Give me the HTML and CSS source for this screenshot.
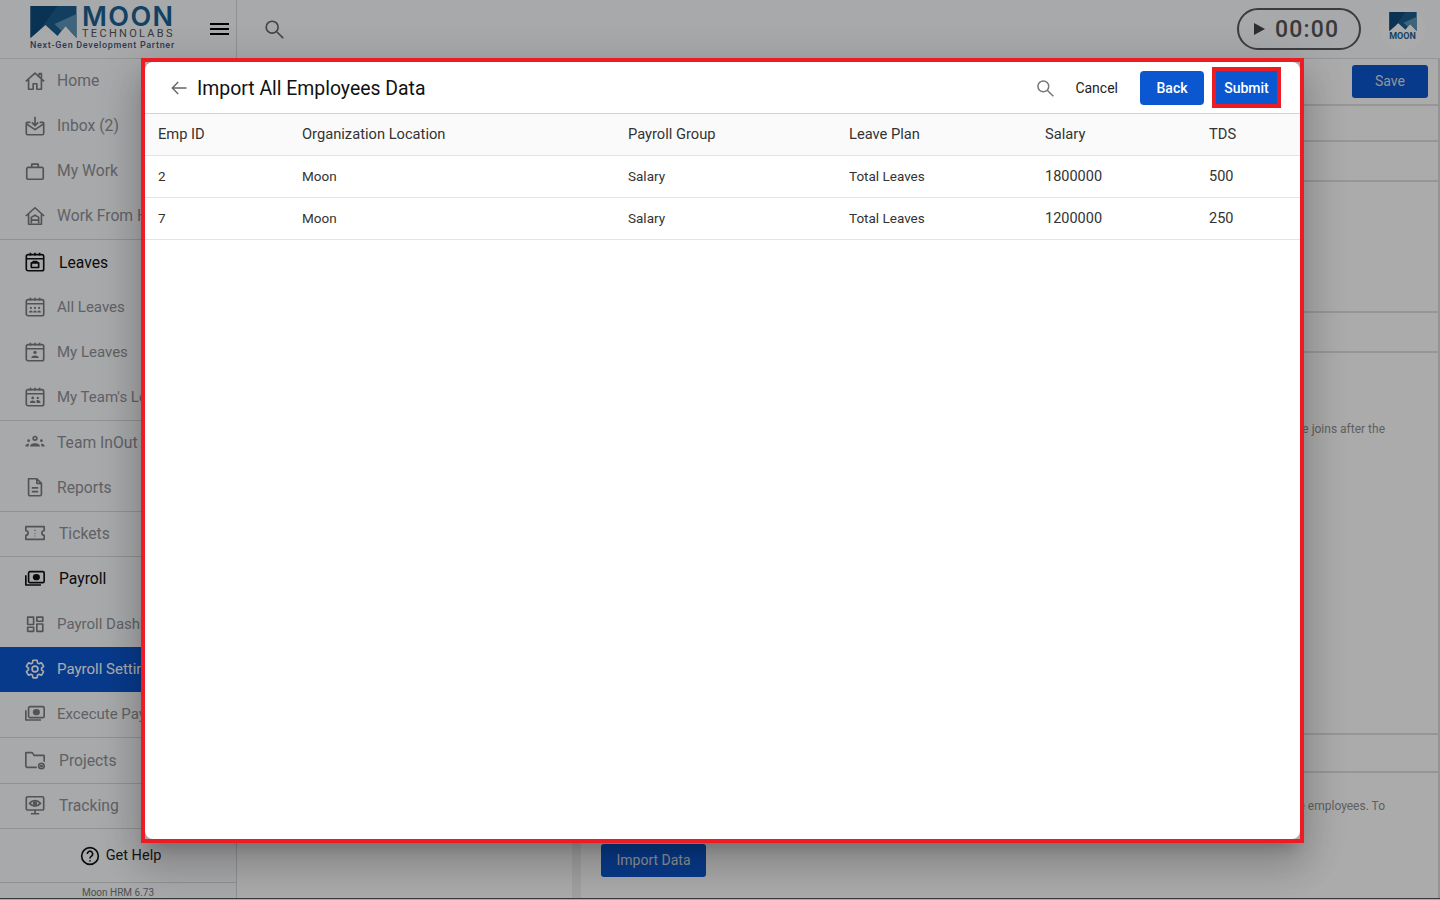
FILE: index.html
```html
<!DOCTYPE html>
<html lang="en">
<head>
    <meta charset="UTF-8">
    <title>Moon HRM - Payroll Settings</title>
    <link rel="stylesheet" href="styles.css">
</head>
<body>
    <svg class="sprite" xmlns="http://www.w3.org/2000/svg">
        <symbol id="i-mark" viewBox="0 0 46 32">
            <path fill="#1c5f8f" d="M0 0h46v32L35 20 27 30 15 19 0 32z"/>
            <path fill="#0f4c7c" d="M0 0h27L10 23 0 32z"/>
            <path fill="#5b95b8" d="M46 8v24L35 20 31 25 24 18z"/>
        </symbol>
        <symbol id="i-home" viewBox="0 0 24 24"><path d="M2 12.5 12 3.5l10 9M16.5 6V4h2.5v4.5M5 10.5V21h5v-6h4v6h5V10.5"/></symbol>
        <symbol id="i-inbox" viewBox="0 0 24 24"><path d="M7 8H3.5a1 1 0 0 0-1 1v11A1.5 1.5 0 0 0 4 21.5h16a1.5 1.5 0 0 0 1.5-1.5V9a1 1 0 0 0-1-1H17M3 10l9 6 9-6M12 2v9M8.5 8l3.5 3.5L15.5 8"/></symbol>
        <symbol id="i-work" viewBox="0 0 24 24"><rect x="3" y="8" width="18" height="13" rx="1.5"/><path d="M8.5 8V4.5h7V8"/></symbol>
        <symbol id="i-wfh" viewBox="0 0 24 24"><path d="M2 12 12 3l10 9M5 10v11h14V10M8 20v-6.500l4-2.500 4 2.500V20M8 16.500h8"/></symbol>
        <symbol id="i-cal-bag" viewBox="0 0 24 24"><rect x="2.5" y="4" width="19" height="17.5" rx="2"/><path d="M2.5 8.5h19M7 2v3M12 2v3M17 2v3"/><path d="M8 13h8v5H8zM10 13v-1.500h4V13"/></symbol>
        <symbol id="i-cal-all" viewBox="0 0 24 24"><rect x="2.5" y="4" width="19" height="17.5" rx="2"/><path d="M2.5 8.5h19M7 2v3M12 2v3M17 2v3"/><g fill="currentColor" stroke="none"><circle cx="7.5" cy="13" r="1.2"/><circle cx="12" cy="13" r="1.2"/><circle cx="16.5" cy="13" r="1.2"/><path d="M5.5 18c0-3 4-3 4 0zM10 18c0-3 4-3 4 0zM14.5 18c0-3 4-3 4 0z"/></g></symbol>
        <symbol id="i-cal-me" viewBox="0 0 24 24"><rect x="2.5" y="4" width="19" height="17.5" rx="2"/><path d="M2.5 8.5h19M7 2v3M12 2v3M17 2v3"/><g fill="currentColor" stroke="none"><circle cx="12" cy="12.5" r="1.8"/><path d="M8 18.5c0-3.500 8-3.500 8 0z"/></g></symbol>
        <symbol id="i-cal-team" viewBox="0 0 24 24"><rect x="2.5" y="4" width="19" height="17.5" rx="2"/><path d="M2.5 8.5h19M7 2v3M12 2v3M17 2v3"/><g fill="currentColor" stroke="none"><circle cx="9.5" cy="13" r="1.5"/><circle cx="15" cy="13" r="1.3"/><path d="M6.5 18.5c0-3.500 6-3.500 6 0zM13.500 15.500c2.500-.5 4.500.5 4.500 3h-4.200c0-1-.2-2-.3-3z"/></g></symbol>
        <symbol id="i-team" viewBox="0 0 24 24"><circle cx="12" cy="8" r="2"/><circle cx="5" cy="10.5" r="1.5" fill="currentColor" stroke="none"/><circle cx="19" cy="10.5" r="1.5" fill="currentColor" stroke="none"/><path fill="currentColor" stroke="none" d="M6.500 17c0-5 11-5 11 0zM1.500 17c0-2.500 2-3 4-3-.5 1-.5 2-.5 3zM22.500 17c0-2.500-2-3-4-3 .5 1 .5 2 .5 3z"/></symbol>
        <symbol id="i-report" viewBox="0 0 24 24"><path d="M5 3h9l5 5v12a1.500 1.500 0 0 1-1.500 1.500h-11A1.500 1.500 0 0 1 5 20zM14 3v5h5M8.500 13h7M8.500 17h7"/></symbol>
        <symbol id="i-ticket" viewBox="0 0 24 24"><path d="M2 5h20v4.500a2.500 2.500 0 0 0 0 5V19H2v-4.500a2.500 2.500 0 0 0 0-5zM12 8.500v1M12 12v.5M12 15v.5"/></symbol>
        <symbol id="i-money" viewBox="0 0 24 24"><rect x="5" y="4" width="17" height="12" rx="1.5"/><path d="M2 8v10.500h16.500"/><ellipse cx="13.5" cy="10" rx="3" ry="2.5" fill="currentColor"/></symbol>
        <symbol id="i-dash" viewBox="0 0 24 24"><rect x="4" y="4.5" width="6.5" height="8"/><rect x="14" y="4.5" width="6.5" height="4.5"/><rect x="14" y="12" width="6.5" height="8"/><rect x="4" y="15.5" width="6.5" height="4.5"/></symbol>
        <symbol id="i-gear" viewBox="0 0 24 24"><path d="M19.140 12.940c.04-.3.06-.61.06-.94 0-.32-.02-.64-.07-.94l2.030-1.580c.18-.14.23-.41.12-.61l-1.920-3.320c-.12-.22-.37-.29-.59-.22l-2.390.96c-.5-.38-1.030-.7-1.620-.94l-.36-2.540c-.04-.24-.24-.41-.48-.41h-3.840c-.24 0-.43.17-.47.41l-.36 2.540c-.59.24-1.130.57-1.620.94l-2.390-.96c-.22-.08-.47 0-.59.22L2.740 8.870c-.12.21-.08.47.12.61l2.030 1.580c-.05.3-.09.63-.09.94s.02.64.07.94l-2.030 1.580c-.18.14-.23.41-.12.61l1.920 3.320c.12.22.37.29.59.22l2.390-.96c.5.38 1.030.7 1.620.94l.36 2.540c.05.24.24.41.48.41h3.840c.24 0 .44-.17.47-.41l.36-2.540c.59-.24 1.130-.56 1.620-.94l2.390.96c.22.08.47 0 .59-.22l1.920-3.320c.12-.22.07-.47-.12-.61l-2.010-1.580z"/><circle cx="12" cy="12" r="3.2"/></symbol>
        <symbol id="i-folder" viewBox="0 0 24 24"><path d="M14 20H3.500A1.500 1.500 0 0 1 2 18.500V4h7l2 3h10.500a.5.5 0 0 1 .5.5V14"/><circle cx="19" cy="18.5" r="3"/><circle cx="19" cy="18.5" r=".8"/></symbol>
        <symbol id="i-monitor" viewBox="0 0 24 24"><rect x="2.5" y="3" width="19" height="14.5" rx="1.5"/><path d="M12 17.500V21M7.500 21.500h9M6 10.200c3.500-4 8.500-4 12 0-3.500 4-8.500 4-12 0z"/><circle cx="12" cy="10.2" r="1.5" fill="currentColor"/></symbol>
        <symbol id="i-search" viewBox="0 0 24 24"><circle cx="10" cy="10" r="6.5"/><path d="m15 15 7 7"/></symbol>
    </svg>

    <div class="app">
        <header class="topbar">
            <div class="brand">
                <div class="logo">
                    <svg class="logo-mark"><use href="#i-mark"/></svg>
                    <div class="logo-name">
                        <span class="logo-moon">MOON</span>
                        <span class="logo-tech">TECHNOLABS</span>
                    </div>
                </div>
                <span class="logo-tag">Next-Gen Development Partner</span>
                <div class="burger"><span></span><span></span><span></span></div>
            </div>
            <svg class="icon top-search"><use href="#i-search"/></svg>
            <div class="timer">
                <span class="play"></span>
                <span class="time">00:00</span>
            </div>
            <div class="avatar">
                <svg class="avatar-mark"><use href="#i-mark"/></svg>
                <span class="avatar-text">MOON</span>
            </div>
        </header>

        <div class="body-row">
            <aside class="sidebar">
                <nav class="nav">
                    <div class="nav-group">
                        <a class="nav-item"><svg class="icon"><use href="#i-home"/></svg>Home</a>
                        <a class="nav-item"><svg class="icon"><use href="#i-inbox"/></svg>Inbox (2)</a>
                        <a class="nav-item"><svg class="icon"><use href="#i-work"/></svg>My Work</a>
                        <a class="nav-item"><svg class="icon"><use href="#i-wfh"/></svg>Work From Home</a>
                    </div>
                    <div class="nav-group">
                        <a class="nav-item nav-head active level"><svg class="icon"><use href="#i-cal-bag"/></svg>Leaves</a>
                        <a class="nav-item level small"><svg class="icon"><use href="#i-cal-all"/></svg>All Leaves</a>
                        <a class="nav-item level small"><svg class="icon"><use href="#i-cal-me"/></svg>My Leaves</a>
                        <a class="nav-item level small"><svg class="icon"><use href="#i-cal-team"/></svg>My Team's Leaves</a>
                    </div>
                    <div class="nav-group">
                        <a class="nav-item"><svg class="icon"><use href="#i-team"/></svg>Team InOut</a>
                        <a class="nav-item"><svg class="icon"><use href="#i-report"/></svg>Reports</a>
                    </div>
                    <div class="nav-group">
                        <a class="nav-item nav-head"><svg class="icon"><use href="#i-ticket"/></svg>Tickets</a>
                    </div>
                    <div class="nav-group">
                        <a class="nav-item nav-head active"><svg class="icon"><use href="#i-money"/></svg>Payroll</a>
                        <a class="nav-item small"><svg class="icon"><use href="#i-dash"/></svg>Payroll Dashboard</a>
                        <a class="nav-item selected small"><svg class="icon"><use href="#i-gear"/></svg>Payroll Settings</a>
                        <a class="nav-item small"><svg class="icon"><use href="#i-money"/></svg>Excecute Payroll</a>
                    </div>
                    <div class="nav-group">
                        <a class="nav-item nav-head level"><svg class="icon"><use href="#i-folder"/></svg>Projects</a>
                    </div>
                    <div class="nav-group">
                        <a class="nav-item nav-head"><svg class="icon"><use href="#i-monitor"/></svg>Tracking</a>
                    </div>
                </nav>
                <div class="help">
                    <svg class="help-icon" viewBox="0 0 24 24"><circle cx="12" cy="12" r="10"/><path d="M8.800 9.500a3.200 3.200 0 1 1 5 2.600c-1.200.8-1.800 1.400-1.800 2.900M12 17v1.500"/></svg>
                    Get Help
                </div>
                <div class="version">Moon HRM 6.73</div>
            </aside>

            <main class="content">
                <div class="content-strip"></div>
                <div class="panel">
                    <div class="panel-head"><button class="btn-save">Save</button></div>
                    <div class="panel-row h-36"></div>
                    <div class="panel-row h-40"></div>
                    <div class="panel-row h-131"></div>
                    <div class="panel-row h-40"></div>
                    <div class="panel-row h-382"><p class="panel-text">Salary will be prorated if the employee joins after the</p></div>
                    <div class="panel-row h-38"></div>
                    <div class="panel-last">
                        <p class="panel-text">This data is applied to all the employees. To</p>
                        <button class="btn-import">Import Data</button>
                    </div>
                </div>
            </main>
        </div>
    </div>

    <div class="overlay"></div>

    <div class="dialog-frame">
        <div class="dialog">
            <div class="dialog-head">
                <svg class="back-arrow" viewBox="0 0 24 24"><path d="M22 12H3M11 4l-8 8 8 8"/></svg>
                <h1>Import All Employees Data</h1>
                <svg class="icon dialog-search"><use href="#i-search"/></svg>
                <span class="cancel">Cancel</span>
                <button class="btn-blue">Back</button>
                <button class="btn-blue btn-marked">Submit</button>
            </div>
            <table class="data-table">
                <colgroup>
                    <col class="col-id"><col class="col-org"><col class="col-group"><col class="col-plan"><col class="col-salary"><col>
                </colgroup>
                <thead>
                    <tr><th>Emp ID</th><th>Organization Location</th><th>Payroll Group</th><th>Leave Plan</th><th>Salary</th><th>TDS</th></tr>
                </thead>
                <tbody>
                    <tr><td>2</td><td>Moon</td><td>Salary</td><td>Total Leaves</td><td class="num">1800000</td><td class="num">500</td></tr>
                    <tr><td>7</td><td>Moon</td><td>Salary</td><td>Total Leaves</td><td class="num">1200000</td><td class="num">250</td></tr>
                </tbody>
            </table>
        </div>
    </div>
</body>
</html>
```

FILE: styles.css
```css
/* Global */
* {
    box-sizing: border-box;
}

body {
    margin: 0;
    height: 900px;
    overflow: hidden;
    font-family: Roboto, "Noto Sans", sans-serif;
    background: #fff;
    color: #222;
}

.sprite {
    display: none;
}

.icon {
    width: 22px;
    height: 22px;
    flex: none;
    fill: none;
    stroke: currentColor;
    stroke-width: 1.8;
    stroke-linejoin: round;
}

.app {
    display: flex;
    flex-direction: column;
    height: 899px;
    border-bottom: 1px solid #555;
}

/* Top bar */
.topbar {
    display: flex;
    align-items: center;
    height: 59px;
    flex: none;
    background: #fbfcff;
    border-bottom: 1px solid #e0e0e0;
}

.brand {
    position: relative;
    width: 237px;
    height: 58px;
    flex: none;
    border-right: 1px solid #d8d8d8;
}

.logo {
    display: flex;
    gap: 5px;
    padding: 6px 0 0 30px;
}

.logo-mark {
    width: 47px;
    height: 32px;
}

.logo-name {
    display: flex;
    flex-direction: column;
}

.logo-moon {
    font-family: Inter, Roboto, sans-serif;
    font-size: 27px;
    line-height: 22px;
    font-weight: 600;
    letter-spacing: 1.4px;
    color: #1c6394;
}

.logo-tech {
    font-size: 11px;
    line-height: 11px;
    letter-spacing: 2.3px;
    color: #555;
}

.logo-tag {
    display: block;
    margin: 1px 0 0 30px;
    font-size: 9px;
    line-height: 10px;
    font-weight: 500;
    letter-spacing: .7px;
    color: #45587a;
}

.burger {
    position: absolute;
    left: 210px;
    top: 23px;
    width: 19px;
    display: flex;
    flex-direction: column;
    gap: 3px;
}

.burger span {
    height: 2px;
    background: #000;
}

.top-search {
    margin-left: 26px;
    color: #666;
}

.timer {
    display: flex;
    align-items: center;
    gap: 10px;
    width: 124px;
    height: 42px;
    margin-left: auto;
    padding-left: 15px;
    border: 2px solid #5a5a5a;
    border-radius: 21px;
}

.play {
    width: 0;
    height: 0;
    border-left: 11px solid #444;
    border-top: 6.5px solid transparent;
    border-bottom: 6.5px solid transparent;
}

.time {
    font-size: 23px;
    font-weight: 500;
    letter-spacing: 1.2px;
    color: #555;
}

.avatar {
    display: flex;
    flex-direction: column;
    align-items: center;
    width: 45px;
    height: 44px;
    margin: 0 15px 0 19px;
    padding-top: 5px;
    border-radius: 50%;
    background: #fff;
}

.avatar-mark {
    width: 28px;
    height: 19px;
}

.avatar-text {
    font-size: 9px;
    line-height: 10px;
    font-weight: 700;
    color: #1c6394;
}

.body-row {
    display: flex;
    flex: 1;
    min-height: 0;
}

/* Sidebar */
.sidebar {
    display: flex;
    flex-direction: column;
    width: 237px;
    flex: none;
    background: #fbfcff;
    border-right: 1px solid #d8d8d8;
}

.nav-group {
    border-bottom: 1px solid #d8d8d8;
}

.nav-item {
    display: flex;
    align-items: center;
    gap: 11px;
    height: 45px;
    padding: 0 0 2px 24px;
    font-size: 15.7px;
    white-space: nowrap;
    color: #8f9197;
}

/* these rows sit 1px lower than the rest */
.nav-item.level {
    padding-bottom: 0;
}

.nav-item.small {
    font-size: 15px;
}

.nav-item .icon {
    color: #7d7d7d;
}

.nav-head {
    gap: 13px;
    height: 44.7px;
}

.nav-item.active {
    color: #111;
}

.nav-item.active .icon {
    color: #111;
}

.nav-item.selected {
    background: #0b57d0;
    color: #fff;
}

.nav-item.selected .icon {
    color: #fff;
}

.help {
    display: flex;
    align-items: center;
    justify-content: center;
    gap: 6px;
    flex: 1;
    padding-left: 5px;
    font-size: 14.5px;
    color: #222;
    border-bottom: 1px solid #d8d8d8;
}

.help-icon {
    width: 20px;
    height: 20px;
    fill: none;
    stroke: #111;
    stroke-width: 2;
}

.version {
    height: 15px;
    font-size: 10px;
    line-height: 19px;
    text-align: center;
    color: #777;
}

/* Background page */
.content {
    display: flex;
    flex: 1;
    padding-left: 335px;
    background: #fff;
}

.content-strip {
    width: 9px;
    flex: none;
    background: #f0f0f0;
}

.panel {
    display: flex;
    flex-direction: column;
    flex: 1;
    border-right: 2px solid #ddd;
}

.panel-head {
    display: flex;
    justify-content: flex-end;
    height: 47px;
    padding: 6px 10px 0 0;
    border-bottom: 2px solid #e0e0e0;
}

.btn-save,
.btn-import {
    padding: 0 0 2px;
    border: none;
    border-radius: 3px;
    background: #0b57d0;
    color: #ddd;
    font-family: inherit;
    font-size: 14px;
}

.btn-save {
    width: 76px;
    height: 33px;
}

.panel-row {
    border-bottom: 2px solid #e0e0e0;
}

.h-36 { height: 36px; }
.h-40 { height: 40px; }
.h-131 { height: 131px; }
.h-382 { height: 382px; }
.h-38 { height: 38px; }

.panel-text {
    margin: 0;
    padding: 68px 53px 0 0;
    font-size: 12px;
    line-height: 16px;
    text-align: right;
    color: #8f8f8f;
}

.panel-last .panel-text {
    padding-top: 25px;
}

.btn-import {
    display: block;
    width: 105px;
    height: 33px;
    margin: 30px 0 0 20px;
}

/* Dialog */
.overlay {
    position: fixed;
    inset: 0;
    background: rgba(0, 0, 0, .33);
}

.dialog-frame {
    position: fixed;
    left: 141px;
    top: 58px;
    width: 1163px;
    height: 785px;
    border: 4px solid #ed1c24;
    box-shadow: 0 11px 15px -7px rgba(0, 0, 0, .2), 0 24px 38px 3px rgba(0, 0, 0, .14), 0 9px 46px 8px rgba(0, 0, 0, .12);
}

.dialog {
    height: 100%;
    background: #fff;
    border-radius: 8px;
    overflow: hidden;
}

.dialog-head {
    display: flex;
    align-items: center;
    height: 52px;
    padding: 0 23px 0 25px;
    border-bottom: 1px solid #d4d4d4;
}

.back-arrow {
    width: 18px;
    height: 18px;
    fill: none;
    stroke: #666;
    stroke-width: 1.8;
}

.dialog-head h1 {
    margin: 2px 0 0 9px;
    font-size: 19.4px;
    font-weight: 400;
    color: #111;
}

.dialog-search {
    width: 20px;
    height: 20px;
    margin-left: auto;
    color: #777;
}

.cancel {
    margin: 0 22px 0 20px;
    font-size: 14px;
    color: #222;
}

.btn-blue {
    width: 64px;
    height: 34px;
    padding: 0;
    border: none;
    border-radius: 4px;
    background: #0b57d0;
    color: #fff;
    font-family: inherit;
    font-size: 14px;
    font-weight: 500;
}

.btn-marked {
    width: 61px;
    height: 33px;
    margin-left: 12px;
    border-radius: 0;
    outline: 4px solid #ed1c24;
}

/* Table */
.data-table {
    width: 100%;
    border-collapse: collapse;
    table-layout: fixed;
}

.col-id { width: 144px; }
.col-org { width: 326px; }
.col-group { width: 221px; }
.col-plan { width: 196px; }
.col-salary { width: 164px; }

.data-table th,
.data-table td {
    height: 42px;
    padding: 0 0 0 13px;
    text-align: left;
    border-bottom: 1px solid #e4e4e4;
}

.data-table th {
    height: 41px;
    background: #fafafa;
    font-size: 14.7px;
    font-weight: 400;
    color: #333;
}

.data-table td {
    font-size: 13.5px;
    color: #333;
}

.data-table .num {
    font-size: 14.5px;
}
```
